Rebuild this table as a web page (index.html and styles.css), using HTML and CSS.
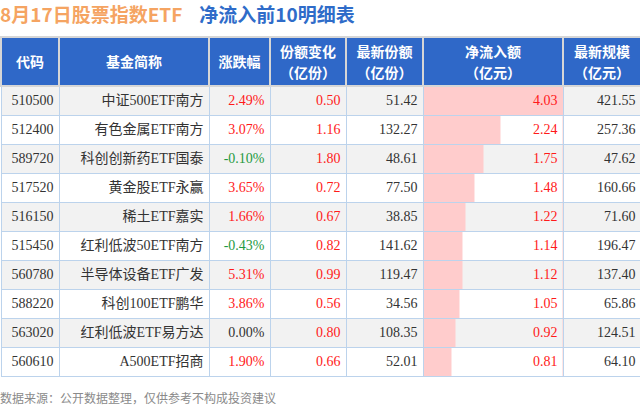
FILE: index.html
```html
<!DOCTYPE html>
<html lang="zh">
<head>
<meta charset="utf-8">
<link rel="stylesheet" href="styles.css">
</head>
<body>
<div class="page">
  <h1 class="title"><span class="t-orange">8月17日股票指数ETF</span><span class="t-blue">净流入前10明细表</span></h1>
  <table class="etf">
    <colgroup>
      <col class="c1"><col class="c2"><col class="c3"><col class="c4"><col class="c5"><col class="c6"><col class="c7">
    </colgroup>
    <thead>
      <tr>
        <th>代码</th>
        <th>基金简称</th>
        <th>涨跌幅</th>
        <th>份额变化<br>（亿份）</th>
        <th>最新份额<br>（亿份）</th>
        <th>净流入额<br>（亿元）</th>
        <th>最新规模<br>（亿元）</th>
      </tr>
    </thead>
    <tbody>
      <tr><td>510500</td><td>中证500ETF南方</td><td class="up">2.49%</td><td class="up">0.50</td><td>51.42</td><td class="bar up" style="--w:100%">4.03</td><td>421.55</td></tr>
      <tr><td>512400</td><td>有色金属ETF南方</td><td class="up">3.07%</td><td class="up">1.16</td><td>132.27</td><td class="bar up" style="--w:55.58%">2.24</td><td>257.36</td></tr>
      <tr><td>589720</td><td>科创创新药ETF国泰</td><td class="down">-0.10%</td><td class="up">1.80</td><td>48.61</td><td class="bar up" style="--w:43.42%">1.75</td><td>47.62</td></tr>
      <tr><td>517520</td><td>黄金股ETF永赢</td><td class="up">3.65%</td><td class="up">0.72</td><td>77.50</td><td class="bar up" style="--w:36.72%">1.48</td><td>160.66</td></tr>
      <tr><td>516150</td><td>稀土ETF嘉实</td><td class="up">1.66%</td><td class="up">0.67</td><td>38.85</td><td class="bar up" style="--w:30.27%">1.22</td><td>71.60</td></tr>
      <tr><td>515450</td><td>红利低波50ETF南方</td><td class="down">-0.43%</td><td class="up">0.82</td><td>141.62</td><td class="bar up" style="--w:28.29%">1.14</td><td>196.47</td></tr>
      <tr><td>560780</td><td>半导体设备ETF广发</td><td class="up">5.31%</td><td class="up">0.99</td><td>119.47</td><td class="bar up" style="--w:27.79%">1.12</td><td>137.40</td></tr>
      <tr><td>588220</td><td>科创100ETF鹏华</td><td class="up">3.86%</td><td class="up">0.56</td><td>34.56</td><td class="bar up" style="--w:26.05%">1.05</td><td>65.86</td></tr>
      <tr><td>563020</td><td>红利低波ETF易方达</td><td>0.00%</td><td class="up">0.80</td><td>108.35</td><td class="bar up" style="--w:22.83%">0.92</td><td>124.51</td></tr>
      <tr><td>560610</td><td>A500ETF招商</td><td class="up">1.90%</td><td class="up">0.66</td><td>52.01</td><td class="bar up" style="--w:20.10%">0.81</td><td>64.10</td></tr>
    </tbody>
  </table>
  <p class="note">数据来源：公开数据整理，仅供参考不构成投资建议</p>
</div>
</body>
</html>
```

FILE: styles.css
```css
html, body {
  margin: 0;
  padding: 0;
  background: #ffffff;
}

.page {
  width: 640px;
  height: 410px;
  overflow: hidden;
  font-family: "Liberation Serif", "Noto Sans CJK SC", serif;
}

.title {
  margin: 0;
  height: 36px;
  line-height: 28px;
  font-size: 19px;
  font-weight: bold;
  font-family: "Noto Sans CJK SC", "Liberation Sans", sans-serif;
  white-space: nowrap;
  display: flex;
  gap: 17px;
}

.t-orange {
  color: #f5a462;
}

.t-blue {
  color: #2f6cc9;
}

.etf {
  width: 640px;
  table-layout: fixed;
  border-collapse: collapse;
}

.c1 { width: 58px; }
.c2 { width: 150px; }
.c3 { width: 61px; }
.c4 { width: 76px; }
.c5 { width: 77px; }
.c6 { width: 140px; }
.c7 { width: 78px; }

.etf th {
  height: 47px;
  padding: 0;
  background: #2f68c8;
  color: #ffffff;
  border: 2px solid #d6d6d6;
  font-family: "Noto Sans CJK SC", "Liberation Sans", sans-serif;
  font-size: 14px;
  font-weight: bold;
  line-height: 21px;
  text-align: center;
  vertical-align: middle;
}

.etf td {
  height: 28px;
  padding: 0 5px 0 0;
  border: 1px solid #bcd3ec;
  font-size: 14px;
  line-height: 20px;
  color: #333333;
  text-align: right;
  vertical-align: middle;
  white-space: nowrap;
}

.etf tbody tr:nth-child(odd) {
  background: #f2f2f2;
}

.etf tbody tr:nth-child(even) {
  background: #ffffff;
}

.etf td.up {
  color: #ff1a1a;
}

.etf td.down {
  color: #1f9a3f;
}

.etf td.bar {
  background: linear-gradient(to right, #ffcccc var(--w), transparent var(--w));
}

.note {
  margin: 13px 0 0 0;
  font-family: "Noto Sans CJK SC", "Liberation Sans", sans-serif;
  font-size: 12px;
  line-height: 16px;
  color: #8a8a8a;
}
```
